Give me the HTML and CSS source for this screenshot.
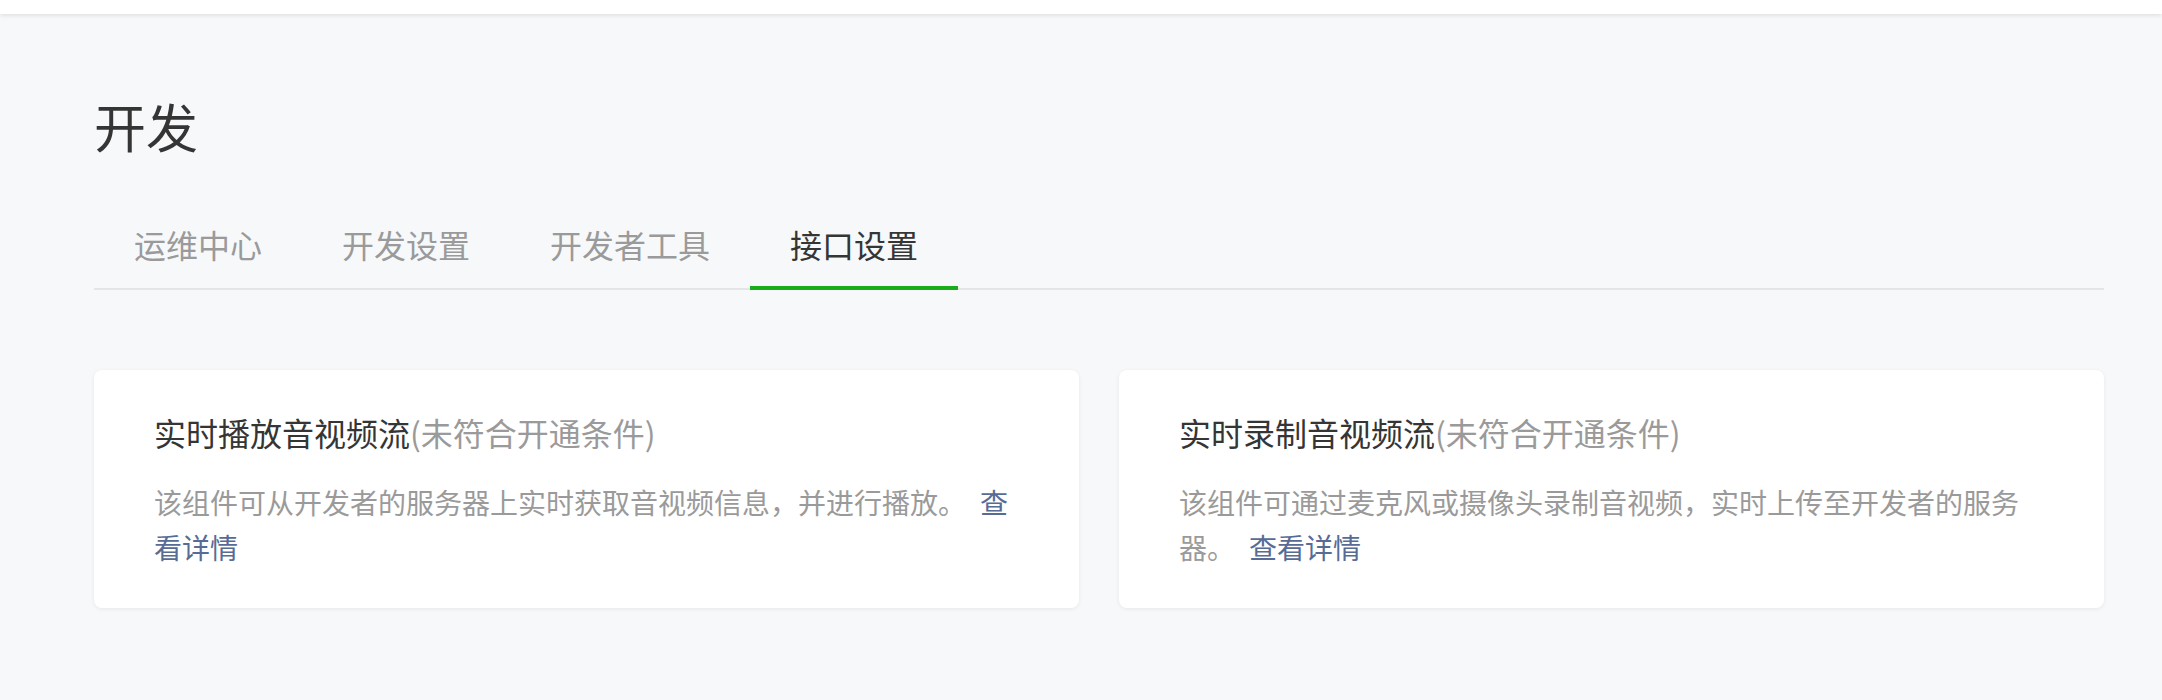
FILE: index.html
```html
<!DOCTYPE html>
<html lang="zh-CN">
<head>
<meta charset="utf-8">
<title>开发</title>
<link rel="stylesheet" href="styles.css">
</head>
<body>
<div class="topbar"></div>
<main class="main">
  <h1 class="page-title">开发</h1>
  <nav class="tabs">
    <a class="tab">运维中心</a>
    <a class="tab">开发设置</a>
    <a class="tab">开发者工具</a>
    <a class="tab active">接口设置</a>
  </nav>
  <section class="cards">
    <div class="card">
      <div class="card-title">实时播放音视频流<span class="cond">(未符合开通条件)</span></div>
      <p class="card-desc">该组件可从开发者的服务器上实时获取音视频信息，并进行播放。<a class="link">查看详情</a></p>
    </div>
    <div class="card">
      <div class="card-title">实时录制音视频流<span class="cond">(未符合开通条件)</span></div>
      <p class="card-desc">该组件可通过麦克风或摄像头录制音视频，实时上传至开发者的服务器。<a class="link">查看详情</a></p>
    </div>
  </section>
</main>
</body>
</html>
```
FILE: styles.css
```css
html, body {
  margin: 0;
  padding: 0;
}
body {
  background: #f7f8fa;
  font-family: "Noto Sans CJK SC", "Noto Sans", sans-serif;
  color: #353535;
  height: 700px;
  overflow: hidden;
}
.topbar {
  height: 14px;
  background: #ffffff;
  box-shadow: 0 1px 5px rgba(0, 0, 0, 0.12);
  position: relative;
}
.main {
  padding: 0 58px 0 94px;
}
.page-title {
  margin: 79px 0 0 0;
  font-size: 52px;
  line-height: 66px;
  font-weight: 400;
  color: #353535;
}
.tabs {
  display: flex;
  margin-top: 63px;
  border-bottom: 2px solid #e4e5e8;
}
.tab {
  position: relative;
  padding: 0 40px 22px;
  font-size: 32px;
  line-height: 44px;
  color: #9a9a9a;
  cursor: pointer;
}
.tab.active {
  color: #353535;
}
.tab.active::after {
  content: "";
  position: absolute;
  left: 0;
  right: 0;
  bottom: -2px;
  height: 4px;
  background: #1aad19;
}
.cards {
  display: grid;
  grid-template-columns: 1fr 1fr;
  gap: 40px;
  margin-top: 80px;
}
.card {
  background: #ffffff;
  border-radius: 8px;
  padding: 40px 60px 38px;
  box-shadow: 0 1px 4px rgba(0, 0, 0, 0.07);
}
.card-title {
  font-size: 32px;
  line-height: 44px;
  color: #353535;
}
.cond {
  color: #9a9a9a;
}
.card-desc {
  margin: 26px 0 0;
  font-size: 28px;
  line-height: 45px;
  color: #9a9a9a;
}
.link {
  margin-left: 14px;
  color: #576b95;
  cursor: pointer;
}
```
